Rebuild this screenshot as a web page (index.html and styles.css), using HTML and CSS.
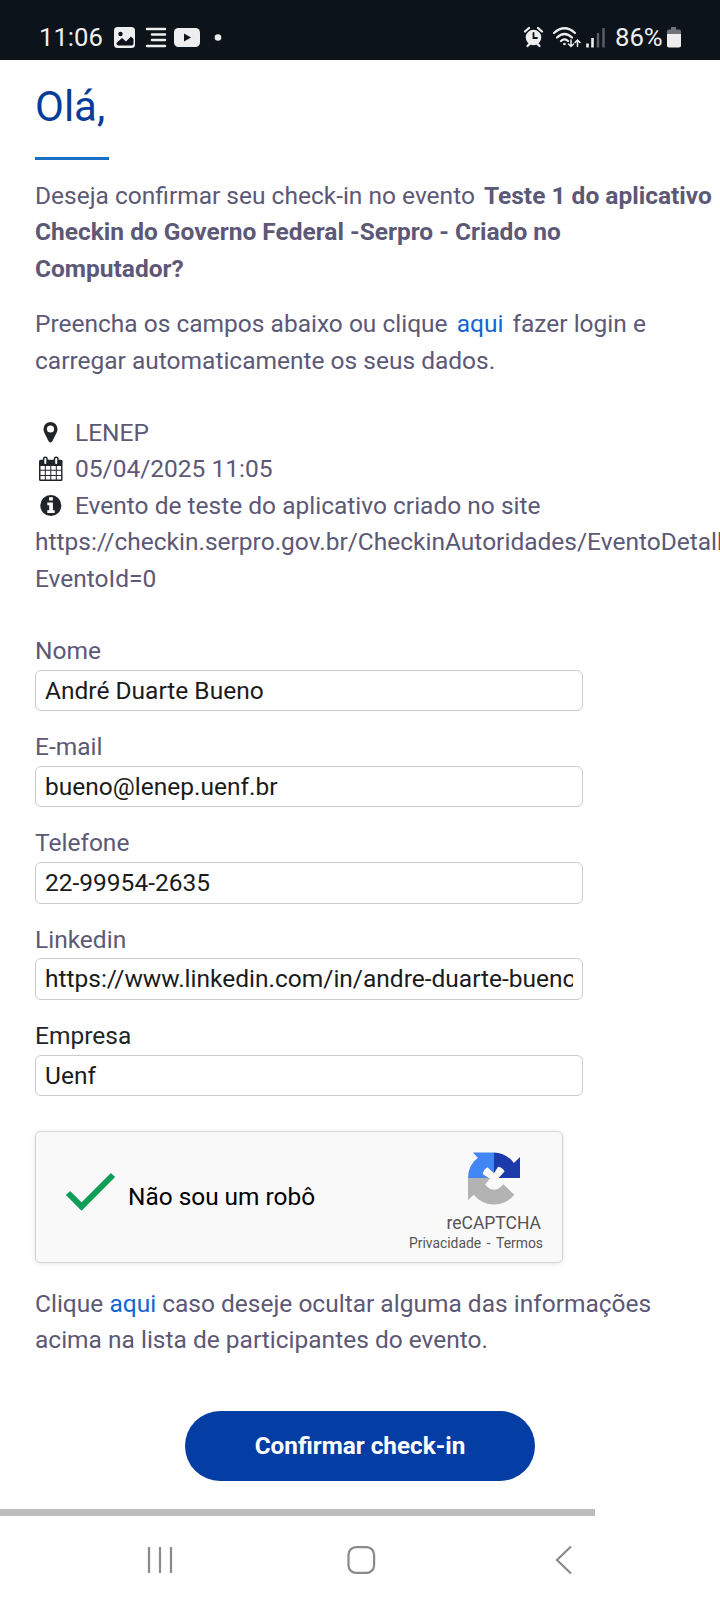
FILE: index.html
```html
<!DOCTYPE html>
<html lang="pt-BR">
<head>
<meta charset="utf-8">
<title>Check-in</title>
<link rel="stylesheet" href="styles.css">
</head>
<body>
<header class="status">
  <span class="clock">11:06</span>
  <svg class="status-left" width="112" height="24" viewBox="0 0 112 24">
    <rect x="1" y="2" width="21" height="21" rx="3.5" fill="#eee"/>
    <circle cx="7.5" cy="9" r="2.2" fill="#0c131a"/>
    <path d="M3.500 18 9 13l4 3.500 5-5 2.500 2.500v4.500q0 2-2 2H5.500q-2 0-2-2z" fill="#0c131a"/>
    <path d="M34 4h18M39 9.500h13M39 15h13M34 21h18" stroke="#eee" stroke-width="2.500" stroke-linecap="round"/>
    <rect x="61" y="3" width="26" height="19" rx="4.500" fill="#eee"/>
    <path d="M71 8.500v8l7-4z" fill="#0c131a"/>
    <circle cx="105" cy="12.500" r="3.300" fill="#eee"/>
  </svg>
  <svg class="status-right" width="84" height="24" viewBox="0 0 84 24">
    <g stroke="#eee" fill="none" stroke-linecap="round">
      <path d="M2 6.500 6 3M19 6.500 15 3M4.500 21l3-3M16.500 21l-3-3" stroke-width="2.300"/>
      <circle cx="10.500" cy="12.500" r="7.800" fill="#eee" stroke="none"/>
      <path d="M10.500 8v5h3.500" stroke="#0c131a" stroke-width="1.800"/>
      <path d="M31 8q10.500-9.500 21 0M34 12.500q7.500-7 15 0M38 16q3.500-3.500 7 0" stroke-width="2.200"/>
      <circle cx="41.500" cy="19" r="1.300" fill="#eee" stroke="none"/>
      <path d="M48 15v6.500M45.500 19l2.500 2.500L50.500 19M54.500 21.500V15M52 17.500l2.500-2.500 2.500 2.500" stroke-width="1.500"/>
    </g>
    <path d="M64.500 18.500v4M69.500 13v9.500" stroke="#eee" stroke-width="2.600"/>
    <path d="M75 8v14.500M80.500 3v19.500" stroke="#596067" stroke-width="2.400"/>
  </svg>
  <span class="percent">86%</span>
  <svg class="battery" width="16" height="24" viewBox="0 0 16 24">
    <path d="M5 2h5v2.500h3q2 0 2 2V10H1V6.500q0-2 2-2h2z" fill="#70757a"/>
    <path d="M1 9h14v11.500q0 2-2 2H3q-2 0-2-2z" fill="#eee"/>
  </svg>
</header>

<main class="page">
  <h1 class="title">Olá,</h1>
  <div class="rule"></div>
  <p class="text question">Deseja confirmar seu check-in no evento <strong>Teste 1 do aplicativo<br>Checkin do Governo Federal -Serpro - Criado no<br>Computador?</strong></p>
  <p class="text intro">Preencha os campos abaixo ou clique <a class="link spaced">aqui</a> fazer login e<br>carregar automaticamente os seus dados.</p>

  <div class="text details">
    <div class="detail"><svg class="icon" width="30" height="28" viewBox="0 0 30 28"><path fill="#212529" fill-rule="evenodd" d="M15.500 3a7 7 0 0 1 7 7c0 3-1.500 5-5.300 12.500q-1.700 2.200-3.400 0C10 15 8.500 13 8.500 10a7 7 0 0 1 7-7zm0 3.400a3.600 3.600 0 1 0 0 7.200 3.600 3.600 0 0 0 0-7.200z"/></svg>LENEP</div>
    <div class="detail"><svg class="icon" width="30" height="28" viewBox="0 0 30 28"><rect x="4" y="3.800" width="23.500" height="21.200" rx="1.500" fill="#212529"/><path d="M5.500 10h4.300v3.700H5.500zM10.800 10h4.500v3.700h-4.500zM16.300 10h4.500v3.700h-4.500zM21.800 10h4.300v3.700h-4.300zM5.500 14.700h4.300v4.400H5.500zM10.800 14.700h4.500v4.400h-4.500zM16.300 14.700h4.500v4.400h-4.500zM21.800 14.700h4.300v4.400h-4.300zM5.500 20.100h4.300v3.500H5.500zM10.800 20.100h4.500v3.500h-4.500zM16.300 20.100h4.500v3.500h-4.500zM21.800 20.100h4.300v3.500h-4.300z" fill="#fff"/><path d="M10.300 3v4M21.200 3v4" stroke="#212529" stroke-width="5" stroke-linecap="round"/><path d="M10.300 3v4M21.200 3v4" stroke="#fff" stroke-width="2" stroke-linecap="round"/></svg>05/04/2025 11:05</div>
    <div class="detail"><svg class="icon" width="30" height="28" viewBox="0 0 30 28"><circle cx="15.800" cy="13.500" r="10.500" fill="#212529"/><path d="M14.100 5.300h3.800v3.300h-3.800zM12.300 10.500h5.600v7.700h1.800v2.800h-7.400v-2.800h1.900v-4.900h-1.900z" fill="#fff"/></svg>Evento de teste do aplicativo criado no site</div>
    <div class="detail">https://checkin.serpro.gov.br/CheckinAutoridades/EventoDetalhes?</div>
    <div class="detail">EventoId=0</div>
  </div>

  <form class="form">
    <label class="field"><span class="text">Nome</span><span class="input">André Duarte Bueno</span></label>
    <label class="field"><span class="text">E-mail</span><span class="input">bueno@lenep.uenf.br</span></label>
    <label class="field"><span class="text">Telefone</span><span class="input">22-99954-2635</span></label>
    <label class="field"><span class="text">Linkedin</span><span class="input"><span class="value">https://www.linkedin.com/in/andre-duarte-bueno</span></span></label>
    <label class="field"><span class="text dark">Empresa</span><span class="input">Uenf</span></label>
  </form>

  <section class="captcha">
    <svg class="check" width="52" height="42" viewBox="0 0 52 42"><path d="M3 22 16.500 35.500 48 4" fill="none" stroke="#0f9d58" stroke-width="6"/></svg>
    <span class="robot">Não sou um robô</span>
    <div class="brand">
      <svg class="logo" width="52" height="53" viewBox="0 0 64 65">
        <path d="M64 32V6l-7.500 7.500A32 32 0 0 0 32 0.500V26l5-8q6 1 8 6L37.500 32z" fill="#1c3aa9"/>
        <path d="M32 .5H6l6 6.500A32 32 0 0 0 0 32h25.500L18 27q1-6 6-8.500L32 26z" fill="#4285f4"/>
        <path d="M0 32v27l7-6.500A32 32 0 0 0 57 52.500L43.500 39.500Q32 53 21 40L27.500 32z" fill="#b3b3b3"/>
      </svg>
      <span class="brand-name">reCAPTCHA</span>
      <span class="terms">Privacidade<span class="dash">-</span>Termos</span>
    </div>
  </section>

  <p class="text hide">Clique <a class="link">aqui</a> caso deseje ocultar alguma das informações<br>acima na lista de participantes do evento.</p>
  <button class="confirm" type="button">Confirmar check-in</button>
</main>

<div class="scrollbar"></div>
<nav class="nav">
  <svg width="30" height="32" viewBox="0 0 30 32"><path d="M4 3v26M15 3v26M26 3v26" stroke="#8a8a8a" stroke-width="2.200"/></svg>
  <svg width="30" height="32" viewBox="0 0 30 32"><rect x="1.500" y="3.200" width="25.600" height="25.600" rx="7.500" fill="none" stroke="#8a8a8a" stroke-width="2.200"/></svg>
  <svg width="30" height="32" viewBox="0 0 30 32"><path d="M22 2.500 8 16l14 13.500" fill="none" stroke="#8a8a8a" stroke-width="2.200"/></svg>
</nav>
</body>
</html>
```
FILE: styles.css
```css
* { box-sizing: border-box; }
html { height: 1600px; overflow: hidden; }
body {
  margin: 0;
  width: 720px;
  height: 1600px;
  display: flex;
  flex-direction: column;
  overflow: hidden;
  background: #fff;
  font-family: Roboto, "Liberation Sans", sans-serif;
}
.status {
  flex: none;
  height: 60px;
  padding: 14px 38px 0 39px;
  display: flex;
  align-items: center;
  background: #0c131a;
  color: #eee;
  font-size: 25.7px;
}
.status svg { flex: none; }
.clock { width: 74px; white-space: nowrap; }
.status-right { margin-left: auto; }
.percent { width: 49px; margin-left: 8px; white-space: nowrap; }
.battery { margin-left: 2px; }
.page {
  flex: none;
  height: 1449px;
  padding: 20px 0 0 35px;
  display: flex;
  flex-direction: column;
  align-items: flex-start;
  overflow: hidden;
  white-space: nowrap;
}
.title {
  margin: 0;
  height: 77px;
  color: #073d98;
  font-size: 42px;
  font-weight: 400;
  line-height: 54px;
}
.rule { width: 74px; height: 3px; background: #1670c4; }
.text {
  margin: 0;
  color: #5c5876;
  font-size: 24.5px;
  line-height: 36.65px;
}
.dark { color: #212529; }
.question { margin-top: 17.7px; }
.question strong { font-weight: 700; margin-left: 3px; }
.intro { margin-top: 18.3px; }
.link { color: #1265d2; }
.spaced { margin: 0 3px; }
.details { margin-top: 35.3px; }
.detail { display: flex; align-items: center; height: 36.65px; }
.icon { flex: none; margin-right: 10px; }
.form { margin-top: 35.2px; display: flex; flex-direction: column; gap: 18.1px; }
.field { display: flex; flex-direction: column; width: 548px; }
.input {
  height: 41.5px;
  padding: 0 9px;
  border: 1px solid #ccc;
  border-radius: 6px;
  background: #fff;
  color: #1b1b1b;
  font-size: 24.5px;
  line-height: 39px;
}
.value { display: block; overflow: hidden; }
.captcha {
  margin-top: 34.5px;
  width: 528px;
  height: 132px;
  display: flex;
  align-items: center;
  border: 1.5px solid #d3d3d3;
  border-radius: 5px;
  background: #f9f9f9;
  box-shadow: 0 1px 5px rgba(0, 0, 0, .1);
}
.check { margin: -10px 0 0 29px; }
.robot { margin-left: 11px; color: #000; font-size: 24.4px; }
.brand {
  width: 136px;
  margin-left: auto;
  margin-right: 19px;
  height: 100%;
  padding-top: 20px;
  display: flex;
  flex-direction: column;
  align-items: flex-end;
  color: #555;
}
.logo { margin-right: 23px; }
.brand-name { margin: 7px 2px 0 0; font-size: 17.5px; line-height: 22px; }
.terms { font-size: 13.9px; line-height: 18px; }
.dash { margin: 0 5.5px; }
.hide { margin-top: 22.9px; }
.confirm {
  margin: 52.2px 0 0 150px;
  width: 350px;
  height: 70px;
  padding: 0 0 2px;
  border: 0;
  border-radius: 35px;
  background: #043da3;
  color: #fff;
  font: 700 24.3px Roboto, "Liberation Sans", sans-serif;
}
.scrollbar { flex: none; width: 595px; height: 7px; background: #bdbdbd; }
.nav {
  flex: 1;
  padding: 4px 141px 0 145px;
  display: flex;
  align-items: center;
  justify-content: space-between;
}
```
